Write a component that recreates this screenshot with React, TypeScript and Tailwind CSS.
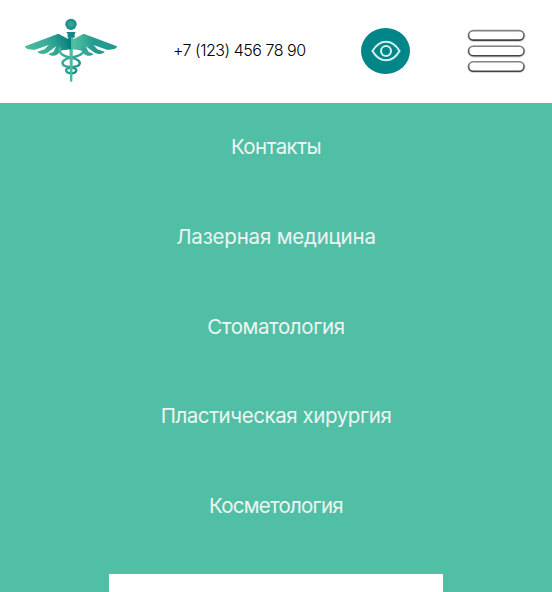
const items = [
  { label: "Контакты", tracking: "tracking-[-0.55px]" },
  { label: "Лазерная медицина", tracking: "tracking-[-0.2px]" },
  { label: "Стоматология", tracking: "tracking-[-0.38px]" },
  { label: "Пластическая хирургия", tracking: "tracking-[-0.43px]" },
  { label: "Косметология", tracking: "tracking-[-0.76px]" },
];

function Wing() {
  return (
    <path d="M155 86 L127 71 L27 109 C27 114 35 121 57 119 L98 105 L86 118 L64 125 C70 133 82 133 93 129 L121 109 L112 126 L97 132 C105 140 119 138 126 132 L132 124 C137 119 148 122 157 118 L165 118 L165 86 Z" />
  );
}

function Logo() {
  return (
    <svg className="h-20 w-[110px]" viewBox="0 0 330 240" fill="none">
      <defs>
        <linearGradient id="left" x1="40" y1="125" x2="150" y2="75" gradientUnits="userSpaceOnUse">
          <stop stopColor="#4abb9d" />
          <stop offset=".55" stopColor="#38a997" />
          <stop offset="1" stopColor="#07817f" />
        </linearGradient>
        <linearGradient id="right" x1="0" y1="0" x2="1" y2="0">
          <stop stopColor="#219a90" />
          <stop offset=".5" stopColor="#269a91" />
          <stop offset="1" stopColor="#55c5a5" />
        </linearGradient>
        <linearGradient id="snake" x1="130" y1="110" x2="200" y2="190" gradientUnits="userSpaceOnUse">
          <stop stopColor="#48b99d" />
          <stop offset=".6" stopColor="#2ba294" />
          <stop offset="1" stopColor="#10827f" />
        </linearGradient>
        <radialGradient id="ball">
          <stop stopColor="#3cab98" />
          <stop offset="1" stopColor="#148b86" />
        </radialGradient>
      </defs>
      <g fill="url(#left)"><Wing /></g>
      <g fill="url(#right)" transform="translate(330 0) scale(-1 1)"><Wing /></g>
      <g stroke="url(#snake)" strokeWidth="7">
        <path d="M132 112 C126 132 144 139 165 143 C187 147 197 157 188 166 C181 173 150 169 150 181 C151 188 160 190 169 190" />
        <path d="M201 112 C211 130 187 139 165 143 C143 147 134 157 143 166 C150 173 181 169 181 181 C180 188 173 190 165 190" />
      </g>
      <path d="M160 84 H171 L169 213 L165 217 L162 213 Z" fill="#49ba9d" />
      <path d="M151 66 H179 L176 72 V83 H155 V72 Z" fill="#148785" />
      <path d="M157 82 H165 V118 H157 Z" fill="#07817f" />
      <circle cx="165" cy="43" r="17" fill="url(#ball)" />
    </svg>
  );
}

function EyeButton() {
  return (
    <button className="flex h-[46px] w-[49px] items-center justify-center rounded-[50%] bg-[#008689]">
      <svg className="h-6 w-[30px]" viewBox="0 0 30 24" fill="none" stroke="#d2eeed" strokeWidth="2.1">
        <path d="M1.5 12 C5 6 9.5 2.7 15 2.7 S25 6 28.5 12 C25 18 20.5 21.3 15 21.3 S5 18 1.5 12 Z" />
        <circle cx="15" cy="12" r="5" />
      </svg>
    </button>
  );
}

function MenuIcon() {
  return (
    <svg className="h-[50px] w-[62px]" viewBox="0 0 62 50" fill="none">
      <defs>
        <linearGradient id="bar" x1="0" y1="0" x2="0" y2="1">
          <stop stopColor="#858585" />
          <stop offset="1" stopColor="#444444" />
        </linearGradient>
      </defs>
      {[5.6, 21.2, 36.8].map((y) => (
        <g key={y}>
          <rect x="3.3" y={y + 0.3} width="56.2" height="10" rx="5" stroke="#d4d4d4" strokeWidth="2" />
          <rect x="3.6" y={y} width="55.4" height="9.5" rx="4.75" fill="white" stroke="url(#bar)" strokeWidth="1.6" />
        </g>
      ))}
    </svg>
  );
}

export default function App() {
  return (
    <div className="h-[592px] w-[552px] overflow-hidden bg-[#50bfa6] font-['Inter',sans-serif]">
      <header className="flex h-[103px] items-start bg-white">
        <div className="ml-4 mt-2.5"><Logo /></div>
        <a className="ml-[47px] mt-[38px] w-[136px] whitespace-nowrap text-base leading-6 font-light tracking-[-0.48px] text-black">+7 (123) 456 78 90</a>
        <div className="ml-[52px] mt-7"><EyeButton /></div>
        <div className="ml-[55px] mt-[25px]"><MenuIcon /></div>
      </header>
      <nav className="flex flex-col items-center pt-[29px]">
        {items.map((item) => (
          <a key={item.label} className={`h-[89.75px] text-[20.5px] leading-[30px] font-normal whitespace-nowrap text-[#eef5f1] ${item.tracking}`}>
            {item.label}
          </a>
        ))}
      </nav>
      <div className="mx-auto -mt-[6.75px] h-5 w-[334px] bg-white" />
    </div>
  );
}
